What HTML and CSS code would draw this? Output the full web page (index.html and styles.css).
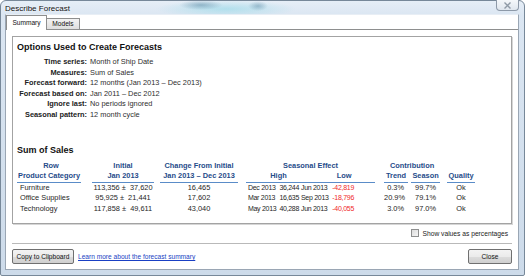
FILE: index.html
```html
<!DOCTYPE html>
<html lang="en">
<head>
    <meta charset="UTF-8">
    <title>Describe Forecast</title>
    <link rel="stylesheet" href="styles.css">
</head>
<body>
    <div class="window">
        <div class="titlebar">
            <span class="title">Describe Forecast</span>
            <span class="close-x">
                <svg width="9" height="7" viewBox="0 0 9 7"><path d="M1.5 0.5 L7.5 6.5 M7.5 0.5 L1.5 6.5" stroke="#8f9aa6" stroke-width="1.4"/></svg>
            </span>
        </div>

        <div class="client">
            <div class="tabs">
                <span class="tab active">Summary</span>
                <span class="tab">Models</span>
            </div>

            <div class="tab-panel">
                <div class="summary-box">
                    <h2>Options Used to Create Forecasts</h2>
                    <dl class="options">
                        <dt>Time series:</dt><dd>Month of Ship Date</dd>
                        <dt>Measures:</dt><dd>Sum of Sales</dd>
                        <dt>Forecast forward:</dt><dd>12 months (Jan 2013 – Dec 2013)</dd>
                        <dt>Forecast based on:</dt><dd>Jan 2011 – Dec 2012</dd>
                        <dt>Ignore last:</dt><dd>No periods ignored</dd>
                        <dt>Seasonal pattern:</dt><dd>12 month cycle</dd>
                    </dl>

                    <h2 class="sales-title">Sum of Sales</h2>
                    <table class="sales">
                        <colgroup>
                            <col class="w-cat"><col class="w-gap11"><col class="w-init"><col class="w-gap6">
                            <col class="w-change"><col class="w-gap8">
                            <col class="w-d1"><col class="w-v1"><col class="w-d2"><col class="w-v2"><col class="w-tail">
                            <col class="w-gap9"><col class="w-trend">
                            <col class="w-gap3"><col class="w-season"><col class="w-gap7"><col class="w-quality">
                        </colgroup>
                        <thead>
                            <tr>
                                <th class="row-head">Row</th><th></th><th>Initial</th><th></th><th>Change From Initial</th><th></th>
                                <th colspan="5">Seasonal Effect</th><th></th><th colspan="3">Contribution</th><th></th><th></th>
                            </tr>
                            <tr>
                                <th class="ul">Product Category</th><th></th><th class="ul">Jan 2013</th><th></th>
                                <th class="ul">Jan 2013 – Dec 2013</th><th></th>
                                <th colspan="2" class="ul high">High</th><th colspan="3" class="ul low">Low</th><th></th>
                                <th class="ul">Trend</th><th></th><th class="ul">Season</th><th></th><th class="ul">Quality</th>
                            </tr>
                        </thead>
                        <tbody>
                            <tr>
                                <td class="cat">Furniture</td><td></td><td class="mid">113,356 ±&nbsp; 37,620</td><td></td>
                                <td class="mid">16,465</td><td></td>
                                <td class="season d1">Dec 2013</td><td class="season num">36,244</td>
                                <td class="season d2">Jun 2013</td><td class="season num neg">-42,819</td><td></td>
                                <td></td><td class="num pct">0.3%</td>
                                <td></td><td class="num pct">99.7%</td><td></td><td class="mid">Ok</td>
                            </tr>
                            <tr>
                                <td class="cat">Office Supplies</td><td></td><td class="mid">95,925 ±&nbsp; 21,441</td><td></td>
                                <td class="mid">17,602</td><td></td>
                                <td class="season d1">Mar 2013</td><td class="season num">16,635</td>
                                <td class="season d2">Sep 2013</td><td class="season num neg">-18,796</td><td></td>
                                <td></td><td class="num pct">20.9%</td>
                                <td></td><td class="num pct">79.1%</td><td></td><td class="mid">Ok</td>
                            </tr>
                            <tr>
                                <td class="cat">Technology</td><td></td><td class="mid">117,858 ±&nbsp; 49,611</td><td></td>
                                <td class="mid">43,040</td><td></td>
                                <td class="season d1">May 2013</td><td class="season num">40,288</td>
                                <td class="season d2">Jun 2013</td><td class="season num neg">-40,055</td><td></td>
                                <td></td><td class="num pct">3.0%</td>
                                <td></td><td class="num pct">97.0%</td><td></td><td class="mid">Ok</td>
                            </tr>
                        </tbody>
                    </table>
                </div>

                <label class="pct-option"><span class="checkbox"></span>Show values as percentages</label>

                <div class="footer">
                    <button class="btn">Copy to Clipboard</button>
                    <a href="#" class="learn-link">Learn more about the forecast summary</a>
                    <button class="btn close-btn">Close</button>
                </div>
            </div>
        </div>
    </div>
</body>
</html>
```

FILE: styles.css
```css
* {
    box-sizing: border-box;
}
body {
    margin: 0;
    background-color: #fff;
    font-family: "Liberation Sans", Arial, sans-serif;
}
.window {
    width: 525px;
    height: 276px;
    display: flex;
    flex-direction: column;
    padding: 0 5px 5px 4px;
    border: 1px solid #778899;
    border-radius: 6px 6px 2px 2px;
    background:
        radial-gradient(ellipse 22px 5px at 200px 4px, rgba(70, 120, 150, 0.45), transparent),
        radial-gradient(ellipse 10px 5px at 257px 5px, rgba(70, 120, 150, 0.4), transparent),
        radial-gradient(ellipse 70px 9px at 225px 8px, rgba(140, 215, 230, 0.55), transparent),
        linear-gradient(#e6eef7 0, #dbe6f2 14px, #cddbea 100%);
}
.titlebar {
    height: 13px;
    display: flex;
    justify-content: space-between;
    align-items: flex-start;
}
.title {
    padding-top: 3px;
    font-size: 8px;
    line-height: 10px;
    color: #111;
    text-shadow: 0 0 3px #fff;
}
.close-x {
    width: 23px;
    height: 11px;
    margin-top: -1px;
    display: flex;
    align-items: center;
    justify-content: center;
    border: 1px solid #8d99a8;
    border-top: none;
    border-radius: 0 0 4px 4px;
    background: linear-gradient(#f4f7fa, #dfe6ee);
}
.client {
    flex: 1;
    display: flex;
    flex-direction: column;
    background-color: #fff;
    border: 1px solid #9aa6b4;
    border-top-color: #e8eef5;
}
.tabs {
    height: 14px;
    display: flex;
    align-items: flex-end;
}
.tab {
    height: 11px;
    width: 33px;
    border: 1px solid #8e8f8f;
    border-bottom: none;
    border-left: none;
    background: linear-gradient(#f3f3f3, #dedede);
    font-size: 6.6px;
    line-height: 10px;
    text-align: center;
    color: #111;
}
.tab.active {
    height: 15px;
    width: 41px;
    margin-bottom: -1px;
    position: relative;
    border-left: 1px solid #8e8f8f;
    background: #fff;
    line-height: 13px;
}
.tab-panel {
    flex: 1;
    display: flex;
    flex-direction: column;
    border-top: 1px solid #8e8f8f;
    padding: 6px 6px 0 6px;
}
.summary-box {
    height: 188px;
    padding: 4px 0 0 4px;
    border: 1px solid #a3a3a3;
    box-shadow: 1px 1px 0 #d6d6d6;
}
h2 {
    margin: 0;
    font-size: 9px;
    line-height: 12px;
    font-weight: bold;
    color: #111;
}
.options {
    display: grid;
    grid-template-columns: 70px auto;
    column-gap: 3px;
    margin: 4px 0 0 0;
    font-size: 7.4px;
    line-height: 10.6px;
    color: #2e2e2e;
}
.options dt {
    text-align: right;
    font-weight: bold;
    color: #222;
}
.options dd {
    margin: 0;
}
.sales-title {
    margin-top: 23px;
}
.sales {
    margin-top: 5px;
    width: 458px;
    table-layout: fixed;
    border-collapse: collapse;
    font-size: 7.4px;
    line-height: 10.5px;
    color: #262626;
}
.sales th, .sales td {
    padding: 0;
    white-space: nowrap;
    overflow: visible;
}
.sales th {
    color: #1f4c8a;
    font-weight: bold;
    text-align: center;
}
.sales th.row-head {
    padding-left: 4px;
}
.sales th.ul {
    border-bottom: 1px solid #5a8cc8;
}
.sales th.high {
    padding-left: 12px;
}
.sales th.low {
    padding-left: 14px;
}
.w-cat { width: 64px; }
.w-gap11 { width: 11px; }
.w-init { width: 62px; }
.w-gap6 { width: 6px; }
.w-change { width: 78px; }
.w-gap8 { width: 8px; }
.w-d1 { width: 31px; }
.w-v1 { width: 22px; }
.w-d2 { width: 30px; }
.w-v2 { width: 25px; }
.w-tail { width: 21px; }
.w-gap9 { width: 9px; }
.w-trend { width: 24px; }
.w-gap3 { width: 3px; }
.w-season { width: 29px; }
.w-gap7 { width: 7px; }
.w-quality { width: 28px; }
.sales td.cat {
    padding-left: 3px;
}
.mid {
    text-align: center;
}
.num {
    text-align: right;
}
.sales td.season {
    font-size: 7px;
    letter-spacing: -0.3px;
}
.sales td.d1 {
    padding-left: 2px;
}
.sales td.d2 {
    padding-left: 2px;
}
.neg {
    color: #f02a2a;
}
.sales td.pct {
    padding-right: 4px;
}
.pct-option {
    margin-top: 4px;
    height: 10px;
    padding-right: 4px;
    display: flex;
    align-items: center;
    justify-content: flex-end;
    gap: 3px;
    font-size: 6.7px;
    color: #222;
}
.checkbox {
    width: 8px;
    height: 8px;
    border: 1px solid #8e8f8f;
    background: linear-gradient(135deg, #dcdcdc, #f6f6f6);
}
.footer {
    margin-top: 5px;
    padding-top: 5px;
    border-top: 1px solid #b9b9b9;
    display: flex;
    align-items: center;
    gap: 4px;
}
.btn {
    height: 15px;
    width: 62px;
    padding: 0;
    border: 1px solid #707070;
    border-radius: 2px;
    background: linear-gradient(#f3f3f3 0, #ebebeb 50%, #dddddd 51%, #cfcfcf 100%);
    font-family: "Liberation Sans", Arial, sans-serif;
    font-size: 6.6px;
    color: #111;
}
.close-btn {
    width: 44px;
    margin-left: auto;
}
.learn-link {
    font-size: 6.6px;
    color: #1a3fc4;
}
```
